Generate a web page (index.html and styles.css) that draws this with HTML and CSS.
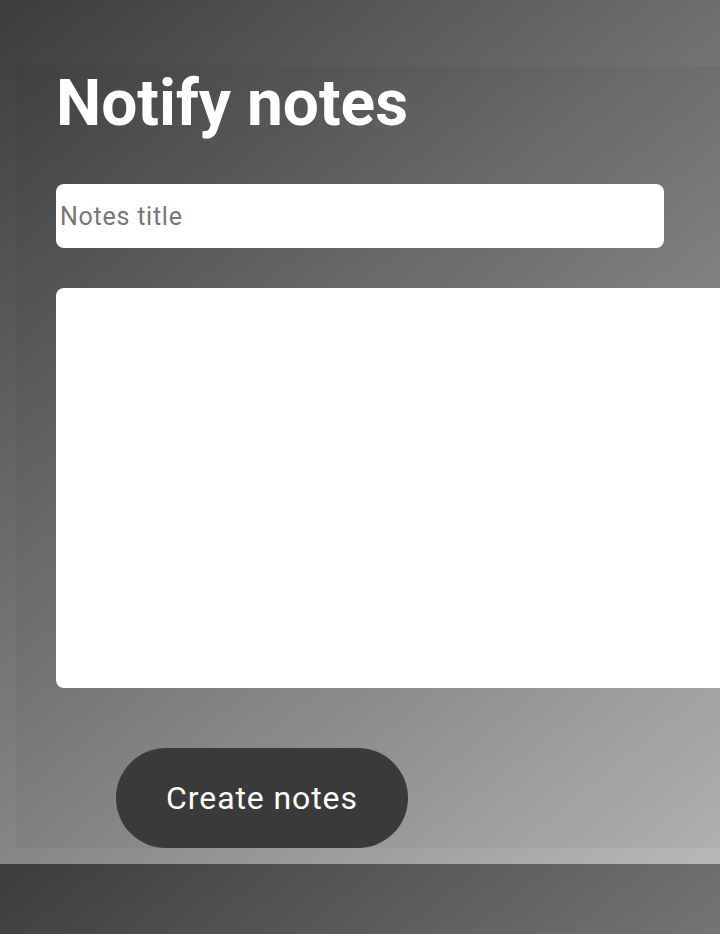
FILE: index.html
```html
<!DOCTYPE html>
<html lang="en">
<head>
<meta charset="utf-8">
<title>Notify notes</title>
<link rel="stylesheet" href="styles.css">
</head>
<body>
  <main class="notes-card">
    <h1 class="notes-heading">Notify notes</h1>
    <form class="notes-form">
      <input class="notes-title" type="text" placeholder="Notes title">
      <textarea class="notes-body"></textarea>
      <button class="notes-create" type="button">Create notes</button>
    </form>
  </main>
</body>
</html>
```

FILE: styles.css
```css
html {
  overflow-x: hidden;
}

body {
  margin: 0;
  padding: 66px 0 16px 16px;
  background: linear-gradient(141deg, #3c3c3c, #b8b8b8);
  font-family: Roboto, "Liberation Sans", sans-serif;
}

.notes-card {
  width: 800px;
  padding: 0 0 0 40px;
  background: rgba(0, 0, 0, 0.035);
  display: flex;
  flex-direction: column;
}

.notes-heading {
  margin: 0 0 43px 0;
  font-size: 64px;
  line-height: 75px;
  font-weight: 700;
  color: #ffffff;
}

.notes-form {
  display: flex;
  flex-direction: column;
  align-items: flex-start;
}

.notes-title {
  box-sizing: border-box;
  width: 608px;
  height: 64px;
  margin: 0 0 40px 0;
  padding: 0 4px;
  border: none;
  border-radius: 8px;
  background: #ffffff;
  font-family: Roboto, "Liberation Sans", sans-serif;
  font-size: 25px;
  letter-spacing: 0.75px;
  color: #333;
  outline: none;
}

.notes-title::placeholder {
  color: #767676;
}

.notes-body {
  box-sizing: border-box;
  width: 720px;
  height: 400px;
  margin: 0 0 60px 0;
  border: none;
  border-radius: 8px;
  background: #ffffff;
  resize: none;
  outline: none;
}

.notes-create {
  width: 292px;
  height: 100px;
  margin-left: 60px;
  border: none;
  border-radius: 50px;
  background: #3a3a3a;
  color: #ffffff;
  font-family: Roboto, "Liberation Sans", sans-serif;
  font-size: 32px;
  letter-spacing: 0.9px;
  cursor: pointer;
}
```
